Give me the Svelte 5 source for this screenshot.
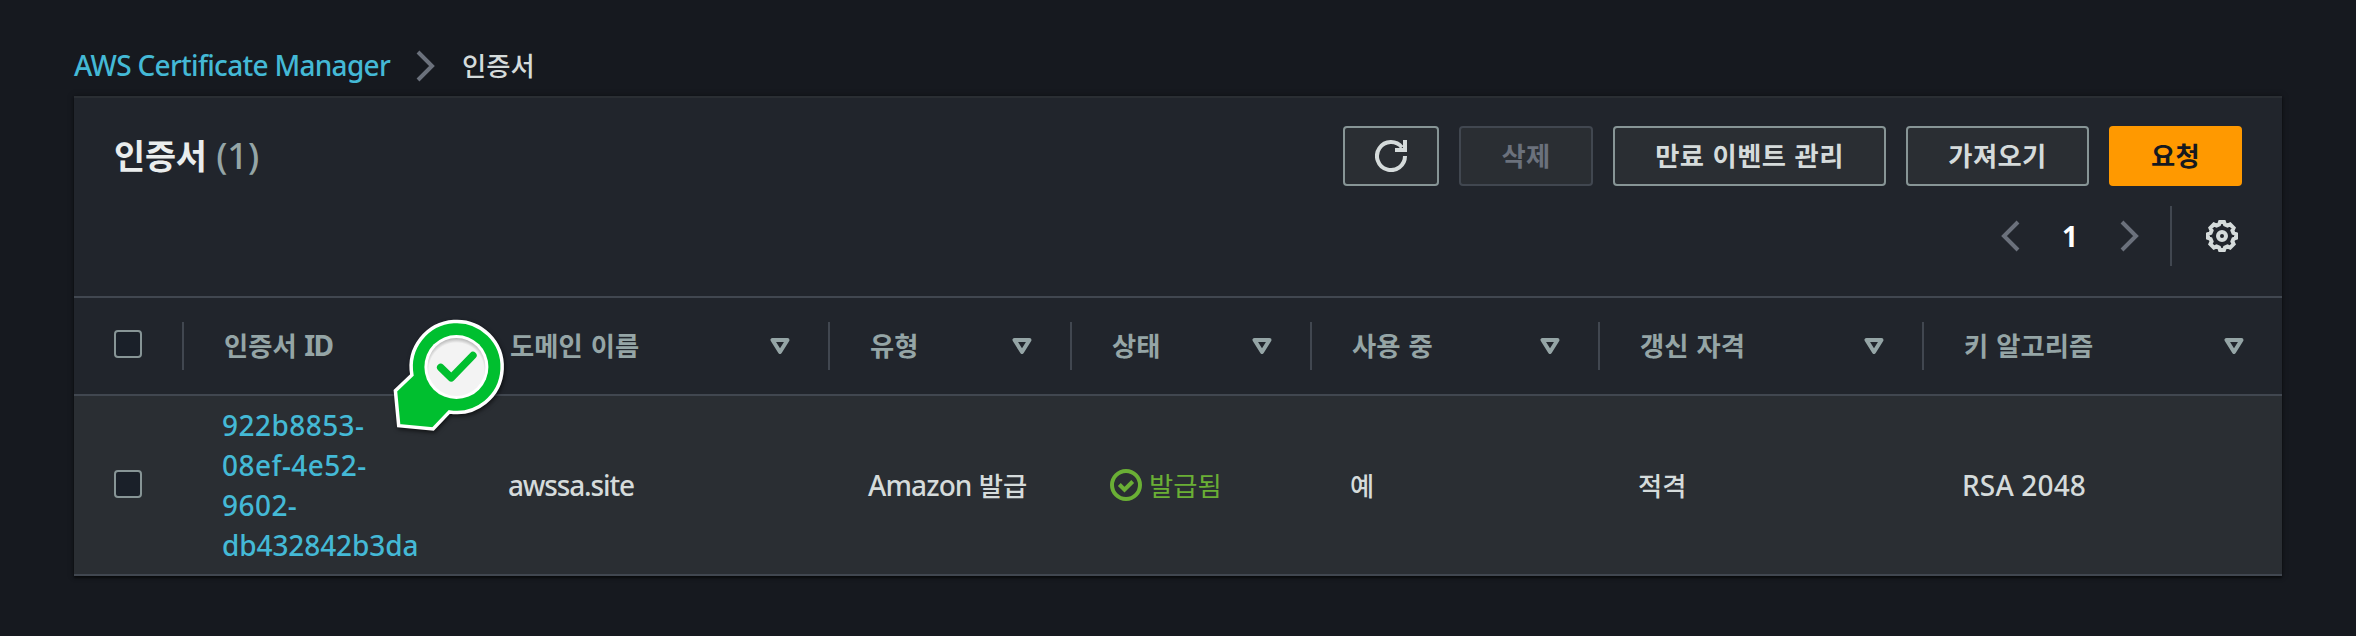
<script>
  const columns = [
    { label: '인증서 ID', sort: false },
    { label: '도메인 이름', sort: true },
    { label: '유형', sort: true },
    { label: '상태', sort: true },
    { label: '사용 중', sort: true },
    { label: '갱신 자격', sort: true },
    { label: '키 알고리즘', sort: true },
  ];
  const idLines = ['922b8853-', '08ef-4e52-', '9602-', 'db432842b3da'];
</script>

<main>
  <nav>
    <a class="crumb" href="#acm">AWS Certificate Manager</a>
    <svg class="sep" width="20" height="32" viewBox="0 0 20 32"><path d="M2 2l14 14L2 30" /></svg>
    <span class="ko">인증서</span>
  </nav>

  <section class="panel">
    <header>
      <h1><span class="ko">인증서</span> <span class="count">(1)</span></h1>
      <div class="tools">
        <div class="actions">
          <button class="refresh" aria-label="refresh">
            <svg width="32" height="32" viewBox="0 0 32 32"><path d="M30 16A14 14 0 1 1 27 7.4M30 0v10H20" /></svg>
          </button>
          <button class="delete" disabled><span class="ko">삭제</span></button>
          <button class="manage"><span class="ko">만료 이벤트 관리</span></button>
          <button class="import"><span class="ko">가져오기</span></button>
          <button class="request"><span class="ko">요청</span></button>
        </div>
        <div class="pager">
          <svg class="arrow" width="20" height="32" viewBox="0 0 20 32"><path d="M18 2L4 16l14 14" /></svg>
          <b>1</b>
          <svg class="arrow" width="20" height="32" viewBox="0 0 20 32"><path d="M2 2l14 14L2 30" /></svg>
          <i></i>
          <svg class="gear" width="32" height="32" viewBox="0 0 32 32">
            <path d="M14 2h4l1 2.6 2.4 1 2.7-1.2 3.5 3.5-1.2 2.7 1 2.4 2.6 1v4l-2.6 1-1 2.4 1.2 2.7-3.5 3.5-2.7-1.2-2.4 1-1 2.6h-4l-1-2.6-2.4-1-2.7 1.2-3.5-3.5 1.2-2.7-1-2.4-2.6-1v-4l2.6-1 1-2.4-1.2-2.7 3.5-3.5 2.7 1.2 2.4-1z" />
            <circle cx="16" cy="16" r="4" />
          </svg>
        </div>
      </div>
    </header>

    <div class="row head">
      <div class="cell check"><span class="box"></span></div>
      {#each columns as c}
        <div class="cell">
          <span class="label">{#if c.sort}<span class="ko">{c.label}</span>{:else}<span class="ko">인증서</span> <span class="latin">ID</span>{/if}</span>
          {#if c.sort}
            <svg width="20" height="16" viewBox="0 0 20 16"><path d="M2.5 2h15L10 14z" /></svg>
          {/if}
        </div>
      {/each}
    </div>

    <div class="row body">
      <div class="cell check"><span class="box"></span></div>
      <div class="cell id"><a href="#cert">{#each idLines as l}<span>{l}</span>{/each}</a></div>
      <div class="cell domain">awssa.site</div>
      <div class="cell"><span><span class="issuer">Amazon</span> <span class="ko">발급</span></span></div>
      <div class="cell status">
        <svg width="32" height="32" viewBox="0 0 32 32"><circle cx="16" cy="16" r="14" /><path d="M9.3 15.5l5.2 5.2 8.2-8.2" /></svg>
        <span class="ko">발급됨</span>
      </div>
      <div class="cell"><span class="ko">예</span></div>
      <div class="cell"><span class="ko">적격</span></div>
      <div class="cell algo">RSA 2048</div>
    </div>
  </section>

  <svg class="marker" width="130" height="130" viewBox="384.6 310 130 130">
    <defs>
      <radialGradient id="disc" cx="0.5" cy="0.56" r="0.56">
        <stop offset="0.85" stop-color="#f3f3f3" />
        <stop offset="1" stop-color="#b5b5b5" />
      </radialGradient>
    </defs>
    <path class="pin" d="M411.500 375L395 390.700l3.300 35 34.400 3.300 16.300-17.100A45.500 45.500 0 1 0 411.500 375z" />
    <circle cx="456" cy="367" r="32" fill="#fff" />
    <circle cx="456" cy="367" r="29" fill="url(#disc)" />
    <path class="tick" d="M440.300 367.500l10.500 10.300 21.700-22.300" />
  </svg>
</main>

<style>
  :global(body) { background: #16191f; }
  main {
    position: relative;
    width: 2356px;
    height: 636px;
    box-sizing: border-box;
    padding: 45px 74px 0;
    overflow: hidden;
    font: 500 28px/40px "Noto Sans", "Noto Sans CJK KR", sans-serif;
    color: #d5dbdb;
  }
  svg { display: block; fill: none; flex: none; }
  a { color: #44b9d6; text-decoration: none; }
  .ko { font-family: "Noto Sans CJK KR", sans-serif; font-size: 0.94em; line-height: 0; word-spacing: 1.8px; letter-spacing: 0.1px; }
  nav { display: flex; align-items: baseline; height: 51px; }
  .crumb { width: 342px; white-space: nowrap; letter-spacing: -0.7px; }
  .sep { align-self: flex-start; margin: 5px 26px 0 0; }
  .sep, .arrow { stroke: #6b717c; stroke-width: 4; }
  .panel {
    height: 480px;
    box-sizing: border-box;
    background: #21252c;
    border-top: 2px solid #2a2e33;
    box-shadow: 0 2px 2px rgba(0, 0, 0, 0.5), 0 0 6px rgba(0, 0, 0, 0.35);
  }
  header { display: flex; justify-content: space-between; height: 198px; padding: 28px 40px 0; box-sizing: border-box; }
  h1 { margin: 0; font-size: 36px; line-height: 60px; font-weight: 700; color: #eaeded; }
  h1 .ko { letter-spacing: -0.2px; }
  .count { font-weight: 500; color: #95a5a6; }
  .tools { display: flex; flex-direction: column; gap: 20px; align-items: flex-end; }
  .actions { display: flex; gap: 20px; }
  button {
    display: flex;
    align-items: center;
    justify-content: center;
    height: 60px;
    box-sizing: border-box;
    padding: 0;
    border: 2px solid #879596;
    border-radius: 4px;
    background: #2a2e33;
    color: #d5dbdb;
    font: 700 28px/40px "Noto Sans", "Noto Sans CJK KR", sans-serif;
    white-space: nowrap;
  }
  button .ko { padding-bottom: 2px; letter-spacing: 0.4px; }
  button svg { stroke: #d5dbdb; stroke-width: 4; }
  .refresh { width: 96px; }
  .delete { width: 134px; border-color: #414750; color: #6b717c; }
  .manage { width: 273px; }
  .import { width: 183px; }
  .request { width: 133px; border-color: #f90; background: #f90; color: #16191f; }
  .pager { display: flex; align-items: center; height: 60px; padding-right: 4px; }
  .pager b { width: 100px; text-align: center; color: #fff; }
  .pager i { width: 2px; height: 60px; margin: 0 34px 0 30px; background: #414750; }
  .gear { stroke: #d5dbdb; stroke-width: 4; }
  .row { display: grid; grid-template-columns: 110px 286px 360px 242px 240px 288px 324px 358px; box-sizing: border-box; }
  .cell { display: flex; align-items: center; padding: 0 40px 0 38px; }
  .check { padding: 0 40px; }
  .box { width: 28px; height: 28px; box-sizing: border-box; border: 2px solid #879596; border-radius: 4px; background: #1a2029; margin-bottom: 2px; }
  .head { height: 100px; border-top: 2px solid #414750; border-bottom: 2px solid #414750; font-weight: 700; color: #95a5a6; }
  .head .cell { height: 48px; box-sizing: border-box; margin-top: 24px; border-right: 2px solid #414750; justify-content: space-between; padding-left: 40px; padding-right: 38px; }
  .head .cell:last-child { border-right: 0; }
  .head .box { margin-bottom: 4px; }
  .head .label { margin-top: -2px; }
  .head svg { stroke: #95a5a6; stroke-width: 4; stroke-linejoin: round; }
  .latin { letter-spacing: -1.6px; }
  .body { height: 180px; background: #2a2e33; border-bottom: 2px solid #414750; }
  .id span { display: block; letter-spacing: 0.45px; }
  .id span:last-child { letter-spacing: -0.1px; }
  .domain { letter-spacing: -1.15px; }
  .issuer { letter-spacing: -0.9px; }
  .algo { letter-spacing: 0.15px; }
  .status { color: #6aaf35; gap: 7px; }
  .status .ko { font-weight: 400; }
  .status svg { stroke: #6aaf35; stroke-width: 4; }
  .marker { position: absolute; left: 385px; top: 310px; filter: drop-shadow(1px 2px 2px rgba(0, 0, 0, 0.6)); }
  .pin { fill: #00bf2f; stroke: #fff; stroke-width: 3.5; }
  .tick { stroke: #00bf2f; stroke-width: 7.5; stroke-linecap: round; stroke-linejoin: round; }
</style>
